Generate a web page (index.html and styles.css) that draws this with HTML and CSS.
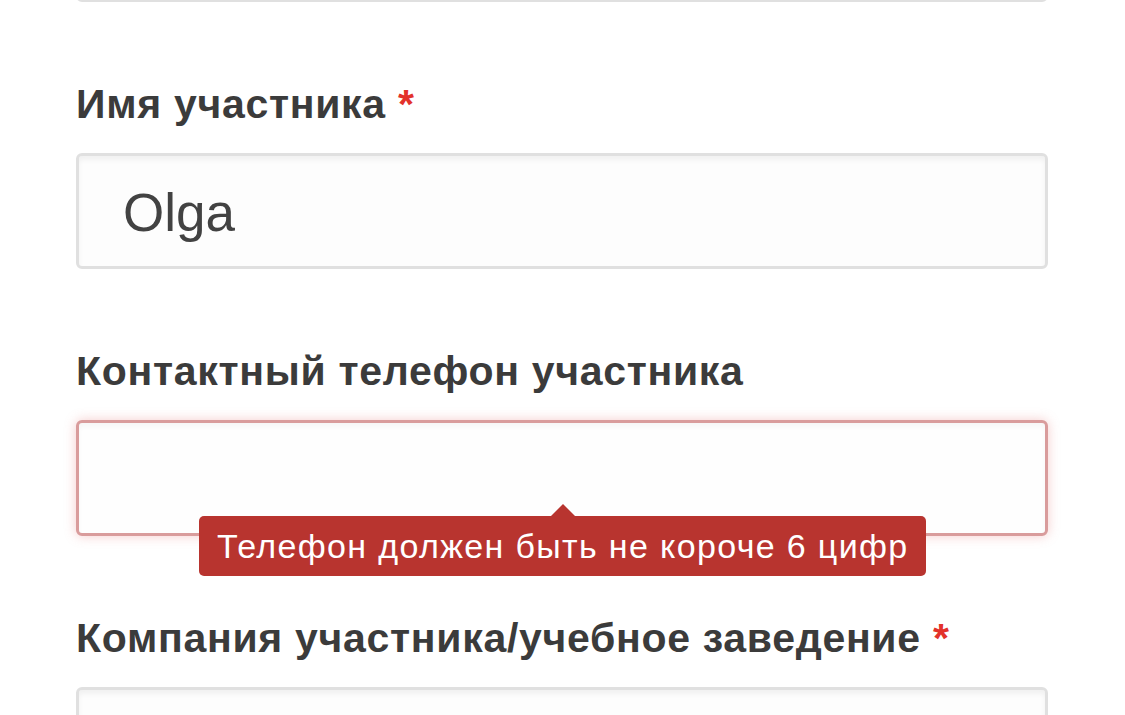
FILE: index.html
```html
<!DOCTYPE html>
<html lang="ru">
<head>
<meta charset="utf-8">
<link rel="stylesheet" href="styles.css">
</head>
<body>
<div class="form">
  <div class="input partial"></div>

  <div class="field">
    <label class="label">Имя участника <span class="req">*</span></label>
    <div class="input"><span class="value">Olga</span></div>
  </div>

  <div class="field">
    <label class="label">Контактный телефон участника</label>
    <div class="input error"></div>
    <div class="tooltip">Телефон должен быть не короче 6 цифр</div>
  </div>

  <div class="field">
    <label class="label">Компания участника/учебное заведение <span class="req">*</span></label>
    <div class="input"></div>
  </div>
</div>
</body>
</html>
```

FILE: styles.css
```css
html, body {
  margin: 0;
  padding: 0;
  background: #ffffff;
  overflow: hidden;
}

body {
  font-family: "Liberation Sans", Arial, sans-serif;
  width: 1125px;
  height: 715px;
}

.form {
  padding-left: 76px;
  width: 972px;
  display: flex;
  flex-direction: column;
}

.input {
  box-sizing: border-box;
  height: 116px;
  border: 3px solid #e0e0e0;
  border-radius: 6px;
  background: #fdfdfd;
  box-shadow: inset 0 4px 5px rgba(0, 0, 0, 0.05);
  display: flex;
  align-items: center;
  padding-left: 44px;
}

.input.partial {
  margin-top: -114px;
}

.field {
  position: relative;
  margin-top: 78px;
  display: flex;
  flex-direction: column;
}

.label {
  display: block;
  font-size: 41px;
  line-height: 48px;
  font-weight: 700;
  letter-spacing: 0.7px;
  color: #3b3b3b;
  margin-bottom: 25px;
  white-space: nowrap;
}

.req {
  color: #e3322b;
}

.value {
  font-size: 53px;
  color: #424242;
  margin-top: 2px;
}

.input.error {
  border-color: #d99c9c;
  background: #fefefe;
  box-shadow: 0 0 12px rgba(225, 110, 110, 0.35), inset 0 4px 5px rgba(0, 0, 0, 0.03);
}

.tooltip {
  position: absolute;
  left: 123px;
  top: 169px;
  width: 727px;
  height: 60px;
  box-sizing: border-box;
  padding-left: 18px;
  background: #b8342f;
  border-radius: 5px;
  color: #ffffff;
  font-size: 34px;
  letter-spacing: 1.35px;
  line-height: 60px;
  white-space: nowrap;
}

.tooltip::before {
  content: "";
  position: absolute;
  left: 351px;
  top: -12px;
  width: 0;
  height: 0;
  border-left: 13px solid transparent;
  border-right: 13px solid transparent;
  border-bottom: 13px solid #b8342f;
}
```
